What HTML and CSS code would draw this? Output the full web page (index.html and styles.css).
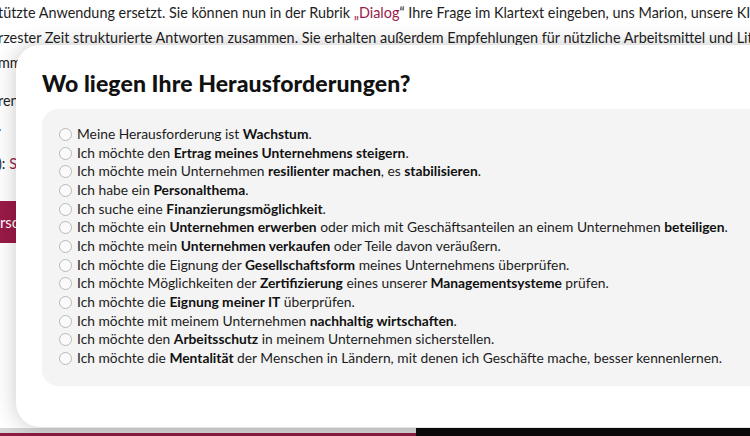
FILE: index.html
```html
<!DOCTYPE html>
<html lang="de">
<head>
<meta charset="utf-8">
<title>Herausforderungen</title>
<link rel="stylesheet" href="styles.css">
</head>
<body>
<div class="page">
  <div class="intro">
    <p class="para">tützte Anwendung ersetzt. Sie können nun in der Rubrik <a class="link">„Dialog</a>“ Ihre Frage im Klartext eingeben, uns Marion, unsere KI-co<br>rzester Zeit strukturierte Antworten zusammen. Sie erhalten außerdem Empfehlungen für nützliche Arbeitsmittel und Literat<br>mmen.</p>
    <p class="para para2">ren<br>.</p>
    <p class="para para3">): <a class="link">S</a></p>
    <div class="btn">ersonal</div>
  </div>
  <div class="footer">
    <div class="footer-left"></div>
    <div class="footer-right"></div>
  </div>
</div>

<div class="modal">
  <h2 class="title">Wo liegen Ihre Herausforderungen?</h2>
  <div class="panel">
    <label class="opt"><span class="radio"></span><span>Meine Herausforderung ist <b>Wachstum</b>.</span></label>
    <label class="opt"><span class="radio"></span><span>Ich möchte den <b>Ertrag meines Unternehmens steigern</b>.</span></label>
    <label class="opt"><span class="radio"></span><span>Ich möchte mein Unternehmen <b>resilienter machen</b>, es <b>stabilisieren</b>.</span></label>
    <label class="opt"><span class="radio"></span><span>Ich habe ein <b>Personalthema</b>.</span></label>
    <label class="opt"><span class="radio"></span><span>Ich suche eine <b>Finanzierungsmöglichkeit</b>.</span></label>
    <label class="opt"><span class="radio"></span><span>Ich möchte ein <b>Unternehmen erwerben</b> oder mich mit Geschäftsanteilen an einem Unternehmen <b>beteiligen</b>.</span></label>
    <label class="opt"><span class="radio"></span><span>Ich möchte mein <b>Unternehmen verkaufen</b> oder Teile davon veräußern.</span></label>
    <label class="opt"><span class="radio"></span><span>Ich möchte die Eignung der <b>Gesellschaftsform</b> meines Unternehmens überprüfen.</span></label>
    <label class="opt"><span class="radio"></span><span>Ich möchte Möglichkeiten der <b>Zertifizierung</b> eines unserer <b>Managementsysteme</b> prüfen.</span></label>
    <label class="opt"><span class="radio"></span><span>Ich möchte die <b>Eignung meiner IT</b> überprüfen.</span></label>
    <label class="opt"><span class="radio"></span><span>Ich möchte mit meinem Unternehmen <b>nachhaltig wirtschaften</b>.</span></label>
    <label class="opt"><span class="radio"></span><span>Ich möchte den <b>Arbeitsschutz</b> in meinem Unternehmen sicherstellen.</span></label>
    <label class="opt"><span class="radio"></span><span>Ich möchte die <b>Mentalität</b> der Menschen in Ländern, mit denen ich Geschäfte mache, besser kennenlernen.</span></label>
  </div>
</div>
</body>
</html>
```

FILE: styles.css
```css
html, body {
  margin: 0;
  padding: 0;
  width: 750px;
  height: 436px;
  overflow: hidden;
  background: #ffffff;
  font-family: Lato, "Liberation Sans", sans-serif;
  color: #1a1a1a;
}

.page {
  position: relative;
  width: 750px;
  height: 436px;
  display: flex;
  flex-direction: column;
}

.intro {
  flex: 1;
  margin-left: -2px;
}

.para {
  margin: 0;
  font-size: 14.4px;
  line-height: 25px;
  white-space: nowrap;
  color: #1e1e1e;
}

.para2 {
  margin-top: 13px;
}

.para3 {
  margin-top: 13px;
}

.link {
  color: #9b1c48;
  text-decoration: none;
}

.btn {
  margin-top: 25px;
  width: 120px;
  height: 42px;
  margin-left: -60px;
  background: #9b1a47;
  color: #ffffff;
  font-size: 15px;
  line-height: 42px;
  padding-left: 54px;
  box-sizing: border-box;
}

.footer {
  height: 8px;
  display: flex;
}

.footer-left {
  width: 416px;
  background: #d6d6d6;
  border-bottom: 3px solid #8e1b42;
  box-sizing: border-box;
}

.footer-right {
  flex: 1;
  background: #0c0a0a;
}

.modal {
  position: absolute;
  left: 16px;
  top: 45px;
  width: 780px;
  height: 382px;
  background: #ffffff;
  border-radius: 24px;
  box-shadow: 0 0 22px rgba(0, 0, 0, 0.22);
  padding: 24px 0 0 26px;
  box-sizing: border-box;
}

.title {
  margin: 0;
  font-size: 23px;
  line-height: 28px;
  font-weight: 900;
  color: #111111;
  letter-spacing: 0.1px;
}

.panel {
  margin-top: 12px;
  background: #f4f4f4;
  border-radius: 16px;
  padding: 16px 0 17px 17px;
  height: 277px;
  box-sizing: border-box;
  display: flex;
  flex-direction: column;
}

.opt {
  display: flex;
  align-items: center;
  gap: 5px;
  font-size: 13.8px;
  line-height: 18.67px;
  color: #1c1c1c;
  white-space: nowrap;
}

.opt b {
  font-weight: 700;
  color: #111111;
}

.radio {
  width: 11px;
  height: 11px;
  border: 1px solid #b9b9b9;
  border-radius: 50%;
  background: #fafafa;
  flex: none;
}
```
